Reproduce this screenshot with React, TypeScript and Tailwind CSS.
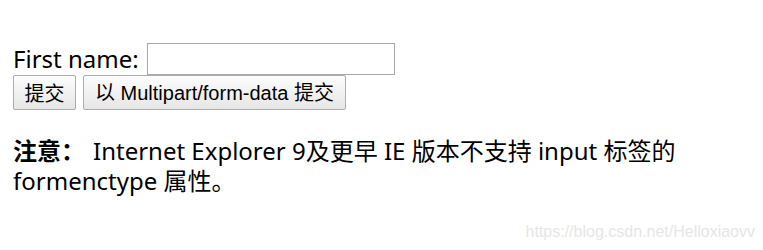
export default function App() {
  return (
    <div className="relative w-[763px] h-[250px] bg-white text-black font-['Noto_Sans','Noto_Sans_CJK_SC',sans-serif] text-[24px]">
      <div className="pt-[42px] pl-[13px]">
        <div className="flex items-center h-[33px]">
          <span className="leading-none">First name:</span>
          <input
            type="text"
            className="ml-[8px] w-[248px] h-[32px] border border-[#a9a9a9] bg-white"
          />
        </div>
        <div className="flex gap-[7px] h-[35px]">
          <button className="h-[35px] w-[63px] border border-[#adadad] rounded-[2px] bg-gradient-to-b from-[#fdfdfd] to-[#e6e6e6] text-[20px] font-['Noto_Sans_CJK_SC',sans-serif] leading-none">
            提交
          </button>
          <button className="h-[35px] w-[263px] border border-[#adadad] rounded-[2px] bg-gradient-to-b from-[#fdfdfd] to-[#e6e6e6] text-[20px] font-['Liberation_Sans','Noto_Sans_CJK_SC',sans-serif] leading-none">
            以 Multipart/form-data 提交
          </button>
        </div>
        <p className="mt-[26px] leading-[30px] w-[710px]">
          <b className="inline-block mr-[8px]">注意：</b>
          <span>Internet Explorer 9及更早 IE 版本不支持 input 标签的 formenctype 属性。</span>
        </p>
      </div>
      <div className="absolute right-[8px] bottom-[6px] text-[16px] text-[#e6e6e6] font-['Liberation_Sans',sans-serif]">
        https://blog.csdn.net/Helloxiaovv
      </div>
    </div>
  );
}
